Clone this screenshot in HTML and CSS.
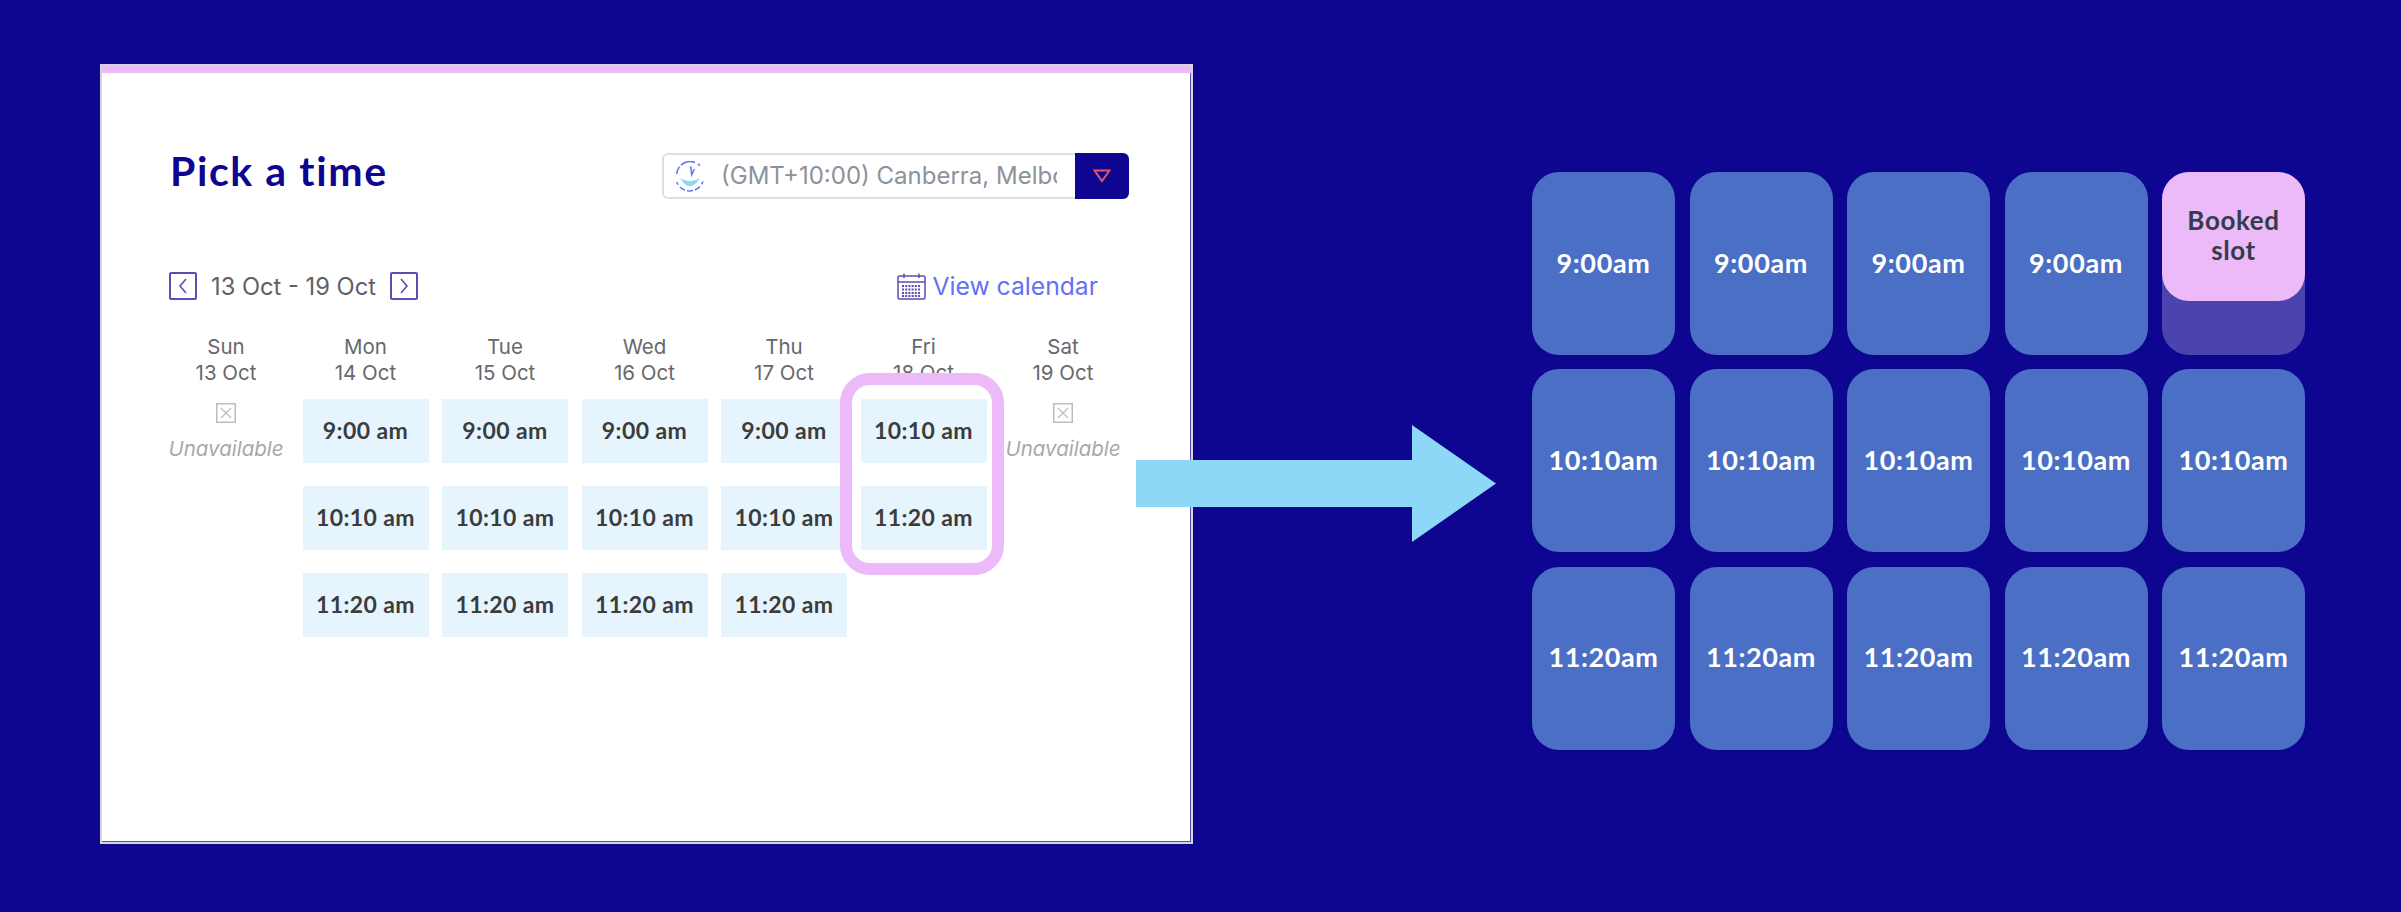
FILE: index.html
```html
<!DOCTYPE html>
<html>
<head>
    <title>Pick a time</title>
    <link rel="stylesheet" href="styles.css">
</head>
<body>
    <div class="panel">
        <div class="panel-band"></div>
        <div class="panel-body">
            <div class="panel-top">
                <h1>Pick a time</h1>
                <div class="tz-select">
                    <svg class="tz-icon" width="28" height="31" viewBox="0 0 28 31" fill="none">
                        <path d="M0.700 13 A13.500 13.500 0 0 1 25 6" stroke="#6272f5" stroke-width="1.500" stroke-dasharray="8 2 15 3 3 2 5"/>
                        <path d="M0.700 21 A14 14 0 0 0 27 20.500" stroke="#6272f5" stroke-width="1.500" stroke-dasharray="3 3 6 2 6 2 6 3 5"/>
                        <path d="M14.700 5.300 L15.700 13.700 L18.300 8" stroke="#6272f5" stroke-width="1.500"/>
                        <path d="M4 17 Q14 33.600 24 17 Q14 23.600 4 17 Z" fill="#8dd7f7"/>
                    </svg>
                    <div class="tz-text">(GMT+10:00) Canberra, Melbourne, Sydney</div>
                    <div class="tz-btn">
                        <svg width="18" height="14" viewBox="0 0 18 14" fill="none">
                            <path d="M1.500 1.500 H16.500 L9 12 Z" stroke="#e0566a" stroke-width="2"/>
                        </svg>
                    </div>
                </div>
            </div>

            <div class="week-nav">
                <div class="week-range">
                    <div class="nav-btn">
                        <svg width="12" height="18" viewBox="0 0 12 18" fill="none"><path d="M9 2 L3 9 L9 16" stroke="#5a4db8" stroke-width="1.600"/></svg>
                    </div>
                    <span>13 Oct - 19 Oct</span>
                    <div class="nav-btn">
                        <svg width="12" height="18" viewBox="0 0 12 18" fill="none"><path d="M3 2 L9 9 L3 16" stroke="#5a4db8" stroke-width="1.600"/></svg>
                    </div>
                </div>
                <div class="view-cal">
                    <svg width="29" height="27" viewBox="0 0 29 27" fill="none">
                        <rect x="1" y="3" width="27" height="23" rx="1.500" stroke="#5a4db8" stroke-width="1.500"/>
                        <path d="M1 9 H28 M7 0.500 V5 M22 0.500 V5" stroke="#5a4db8" stroke-width="1.500"/>
                        <path d="M5 13 H24 M5 16.500 H24 M5 20 H24 M5 23 H24" stroke="#5a4db8" stroke-width="2" stroke-dasharray="2 1.200"/>
                    </svg>
                    <span>View calendar</span>
                </div>
            </div>

            <div class="week">
                <div class="day">
                    <div class="day-head">Sun<br>13 Oct</div>
                    <div class="slots">
                        <div class="unavail">
                            <svg width="20" height="20" viewBox="0 0 20 20" fill="none">
                                <rect x="0.750" y="0.750" width="18.500" height="18.500" stroke="#bdbdbd" stroke-width="1.500"/>
                                <path d="M5 5 L15 15 M15 5 L5 15" stroke="#bdbdbd" stroke-width="1.200"/>
                            </svg>
                            <span>Unavailable</span>
                        </div>
                    </div>
                </div>
                <div class="day">
                    <div class="day-head">Mon<br>14 Oct</div>
                    <div class="slots">
                        <div class="slot">9:00 am</div>
                        <div class="slot">10:10 am</div>
                        <div class="slot">11:20 am</div>
                    </div>
                </div>
                <div class="day">
                    <div class="day-head">Tue<br>15 Oct</div>
                    <div class="slots">
                        <div class="slot">9:00 am</div>
                        <div class="slot">10:10 am</div>
                        <div class="slot">11:20 am</div>
                    </div>
                </div>
                <div class="day">
                    <div class="day-head">Wed<br>16 Oct</div>
                    <div class="slots">
                        <div class="slot">9:00 am</div>
                        <div class="slot">10:10 am</div>
                        <div class="slot">11:20 am</div>
                    </div>
                </div>
                <div class="day">
                    <div class="day-head">Thu<br>17 Oct</div>
                    <div class="slots">
                        <div class="slot">9:00 am</div>
                        <div class="slot">10:10 am</div>
                        <div class="slot">11:20 am</div>
                    </div>
                </div>
                <div class="day">
                    <div class="day-head">Fri<br>18 Oct</div>
                    <div class="slots">
                        <div class="slot">10:10 am</div>
                        <div class="slot">11:20 am</div>
                        <div class="ring"></div>
                    </div>
                </div>
                <div class="day">
                    <div class="day-head">Sat<br>19 Oct</div>
                    <div class="slots">
                        <div class="unavail">
                            <svg width="20" height="20" viewBox="0 0 20 20" fill="none">
                                <rect x="0.750" y="0.750" width="18.500" height="18.500" stroke="#bdbdbd" stroke-width="1.500"/>
                                <path d="M5 5 L15 15 M15 5 L5 15" stroke="#bdbdbd" stroke-width="1.200"/>
                            </svg>
                            <span>Unavailable</span>
                        </div>
                    </div>
                </div>
            </div>
        </div>
    </div>

    <svg class="arrow" width="360" height="117" viewBox="0 0 360 117">
        <path d="M0 35 H276 V0 L360 58.500 L276 117 V82 H0 Z" fill="#8dd7f7"/>
    </svg>

    <div class="tiles">
        <div class="tile">9:00am</div>
        <div class="tile">9:00am</div>
        <div class="tile">9:00am</div>
        <div class="tile">9:00am</div>
        <div class="tile tile-booked"><div class="booked">Booked<br>slot</div></div>
        <div class="tile">10:10am</div>
        <div class="tile">10:10am</div>
        <div class="tile">10:10am</div>
        <div class="tile">10:10am</div>
        <div class="tile">10:10am</div>
        <div class="tile">11:20am</div>
        <div class="tile">11:20am</div>
        <div class="tile">11:20am</div>
        <div class="tile">11:20am</div>
        <div class="tile">11:20am</div>
    </div>
</body>
</html>
```

FILE: styles.css
```css
html, body {
    height: 100%;
}
body {
    position: relative;
    margin: 0;
    padding: 64px 96px 0 100px;
    box-sizing: border-box;
    height: 912px;
    overflow: hidden;
    background: #0e0691;
    font-family: Inter, "Liberation Sans", sans-serif;
    display: flex;
    justify-content: space-between;
    align-items: flex-start;
}
.panel {
    box-sizing: border-box;
    width: 1093px;
    height: 780px;
    background: white;
    border: 2px solid #d5d5dc;
    box-shadow: inset -1px -1px 0 #5a4db8;
}
.panel-band {
    height: 7px;
    background: #ecb9f9;
}
.panel-body {
    padding: 80px 61px 0 61px;
}
.panel-top {
    display: flex;
    justify-content: space-between;
    align-items: flex-start;
    padding-left: 7px;
}
h1 {
    margin: 0;
    font-family: Lato, sans-serif;
    font-size: 41px;
    line-height: 36px;
    font-weight: 700;
    letter-spacing: 1.600px;
    color: #0e0691;
}
.tz-select {
    box-sizing: border-box;
    width: 467px;
    height: 46px;
    margin-right: 1px;
    display: flex;
    align-items: center;
    border: 2px solid #dfdfdf;
    border-right: none;
    border-radius: 6px;
}
.tz-icon {
    margin-left: 12px;
    flex-shrink: 0;
}
.tz-text {
    margin-left: 17px;
    width: 336px;
    margin-top: -2px;
    flex-shrink: 0;
    overflow: hidden;
    white-space: nowrap;
    font-size: 24px;
    color: #8c929b;
}
.tz-btn {
    width: 54px;
    height: 46px;
    margin-left: auto;
    background: #0e0691;
    border-radius: 0 6px 6px 0;
    display: flex;
    align-items: center;
    justify-content: center;
}
.week-nav {
    display: flex;
    justify-content: space-between;
    align-items: center;
    margin-top: 72px;
    padding: 0 32px 0 6px;
}
.week-range {
    display: flex;
    align-items: center;
    gap: 14px;
    font-size: 23.700px;
    color: #5f6166;
}
.nav-btn {
    box-sizing: border-box;
    width: 28px;
    height: 28px;
    border: 2px solid #5a4db8;
    border-radius: 2px;
    display: flex;
    align-items: center;
    justify-content: center;
}
.view-cal {
    display: flex;
    align-items: center;
    gap: 6px;
    font-size: 24.700px;
    color: #6272f5;
}
.week {
    display: grid;
    grid-template-columns: repeat(7, 126px);
    column-gap: 13.500px;
    margin-top: 33px;
}
.day-head {
    text-align: center;
    font-size: 20.500px;
    line-height: 26px;
    color: #66686c;
}
.slots {
    position: relative;
    display: flex;
    flex-direction: column;
    gap: 23px;
    margin-top: 13px;
}
.slot {
    height: 64px;
    padding-bottom: 2px;
    box-sizing: border-box;
    background: #e6f5fd;
    display: flex;
    align-items: center;
    justify-content: center;
    font-family: Lato, sans-serif;
    font-size: 23px;
    font-weight: 700;
    letter-spacing: 0.400px;
    color: #3c3c3c;
}
.unavail {
    display: flex;
    flex-direction: column;
    align-items: center;
    gap: 13px;
    padding-top: 4px;
    font-size: 20.500px;
    font-style: italic;
    white-space: nowrap;
    color: #a9a9a9;
}
.ring {
    position: absolute;
    top: -26px;
    left: -21px;
    width: 164px;
    height: 202px;
    box-sizing: border-box;
    border: 12px solid #ecb9f9;
    border-radius: 30px;
}
.arrow {
    position: absolute;
    left: 1136px;
    top: 425px;
}
.tiles {
    display: grid;
    grid-template-columns: repeat(5, 143px);
    grid-auto-rows: 183px;
    column-gap: 14.500px;
    row-gap: 14.300px;
    margin-top: 108px;
}
.tile {
    position: relative;
    padding-bottom: 3px;
    box-sizing: border-box;
    background: #4b6fc4;
    border-radius: 27px;
    display: flex;
    align-items: center;
    justify-content: center;
    font-family: Lato, sans-serif;
    font-size: 27px;
    font-weight: 700;
    letter-spacing: 0.600px;
    color: white;
}
.tile-booked {
    background: #4b44ac;
    align-items: flex-start;
    padding-bottom: 0;
}
.booked {
    box-sizing: border-box;
    width: 100%;
    height: 129px;
    padding-top: 33px;
    background: #ecb9f9;
    border-radius: 27px;
    text-align: center;
    font-size: 26px;
    line-height: 30px;
    color: #333d4a;
}
```
